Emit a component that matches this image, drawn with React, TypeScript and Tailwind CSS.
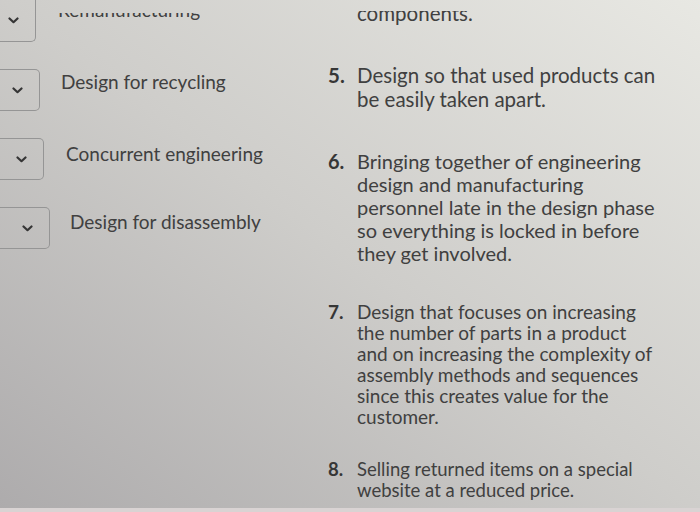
import React from 'react'

const choices = [
  { label: 'Design for recycling', box: 'w-[40px]', text: 'pl-[21px] pt-[1px]' },
  { label: 'Concurrent engineering', box: 'w-[44px]', text: 'pl-[22px] pt-[4px]' },
  { label: 'Design for disassembly', box: 'w-[50px]', text: 'pl-[20px] pt-[3px]' },
]

const answers = [
  {
    n: '5.',
    lines: ['Design so that used products can', 'be easily taken apart.'],
    style: 'mt-[38px] text-[20.5px] leading-[24px]',
  },
  {
    n: '6.',
    lines: [
      'Bringing together of engineering',
      'design and manufacturing',
      'personnel late in the design phase',
      'so everything is locked in before',
      'they get involved.',
    ],
    style: 'mt-[39px] text-[20px] leading-[23px]',
  },
  {
    n: '7.',
    lines: [
      'Design that focuses on increasing',
      'the number of parts in a product',
      'and on increasing the complexity of',
      'assembly methods and sequences',
      'since this creates value for the',
      'customer.',
    ],
    style: 'mt-[36px] text-[19px] leading-[21px]',
  },
  {
    n: '8.',
    lines: ['Selling returned items on a special', 'website at a reduced price.'],
    style: 'mt-[32px] text-[18.5px] leading-[21px]',
  },
]

function Chevron() {
  return (
    <svg width="11" height="7" viewBox="0 0 11 7" fill="none">
      <path d="M1.5 1.5 L5.5 5.2 L9.5 1.5" stroke="#353535" strokeWidth="2.2" strokeLinecap="round" strokeLinejoin="round" />
    </svg>
  )
}

function Select({ width, className = '' }: { width: string; className?: string }) {
  return (
    <div
      className={`${width} h-[42px] shrink-0 border-[1.5px] border-[#959595] border-l-0 rounded-r-[5px] flex items-center justify-end pr-[16px] ${className}`}
    >
      <Chevron />
    </div>
  )
}

export default function App() {
  return (
    <div
      className="w-[700px] h-[512px] overflow-hidden flex flex-col bg-linear-to-tr from-[#adabac] via-[#cecdca] to-[#e8e8e3] text-[#404040]"
      style={{ fontFamily: 'Lato, "Noto Sans", sans-serif' }}
    >
      <div className="flex-1 flex">
        {/* dropdown column */}
        <div className="w-[328px] flex flex-col gap-[27px]">
          <div className="flex items-start">
            <Select width="w-[36px]" className="border-t-0 rounded-tr-none" />
            {/* label scrolled mostly out of view */}
            <div className="pl-[22px] mt-[13px] h-[8px] overflow-hidden flex items-end">
              <span className="text-[19px] leading-[23px] whitespace-nowrap">Remanufacturing</span>
            </div>
          </div>
          {choices.map((c) => (
            <div key={c.label} className="flex items-start">
              <Select width={c.box} />
              <div className={`${c.text} text-[19px] leading-[23px] whitespace-nowrap`}>{c.label}</div>
            </div>
          ))}
        </div>

        {/* answer list */}
        <div className="flex-1 flex flex-col pt-[11px]">
          <div className="pl-[29px] h-[14px] overflow-hidden flex items-end">
            <span className="text-[20.5px] leading-[24px] whitespace-nowrap">components.</span>
          </div>
          <ol className="flex flex-col">
            {answers.map((a) => (
              <li key={a.n} className={`${a.style} flex`}>
                <span className="w-[29px] shrink-0 font-bold text-[#363636]">{a.n}</span>
                <span className="flex flex-col whitespace-nowrap">
                  {a.lines.map((l) => (
                    <span key={l}>{l}</span>
                  ))}
                </span>
              </li>
            ))}
          </ol>
        </div>
      </div>
      <div className="h-[4px] bg-[#d9d3d3]" />
    </div>
  )
}
